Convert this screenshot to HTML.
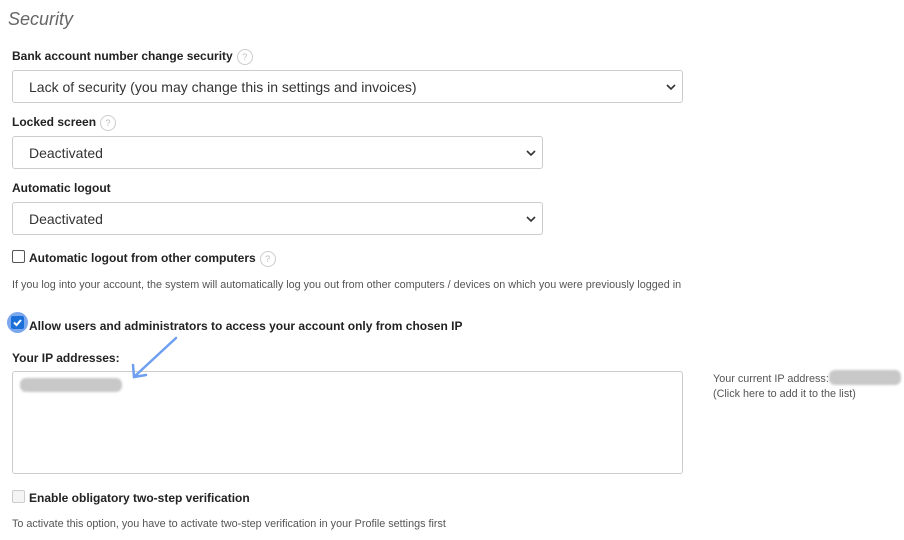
<!DOCTYPE html>
<html><head><style>
body{margin:0;width:904px;height:540px;background:#fff;font-family:"Liberation Sans",Arial,sans-serif;position:relative;overflow:hidden}
.a{position:absolute;white-space:nowrap}
.t{left:8px;top:9px;font-size:18px;font-style:italic;color:#666}
.l{font-size:12px;font-weight:bold;color:#222;left:12px}
.q{display:inline-block;width:14px;height:14px;border:1px solid #ccc;border-radius:50%;font-size:9px;color:#bbb;text-align:center;line-height:14px;font-weight:normal;vertical-align:middle;margin-left:4px}
.s{left:12px;border:1px solid #ccc;border-radius:3px;height:33px;box-sizing:border-box;font-size:14px;color:#333;line-height:32px;padding-left:16px;background:#fff}
.s svg{position:absolute;right:6px;top:13px}
.h{left:12px;font-size:10.8px;color:#555}
.cb{position:absolute;width:11px;height:11px;border:1px solid #555;border-radius:2px;background:#fff}
.blur{position:absolute;background:#c8c8c8;border-radius:6px;filter:blur(1px)}
</style></head><body>
<div class="a t">Security</div>
<div class="a l" style="top:49px">Bank account number change security<span class="q">?</span></div>
<div class="a s" style="top:70px;width:671px">Lack of security (you may change this in settings and invoices)<svg width="10" height="7"><path d="M1 1l4 4 4-4" fill="none" stroke="#333" stroke-width="1.6"/></svg></div>
<div class="a l" style="top:115px">Locked screen<span class="q">?</span></div>
<div class="a s" style="top:136px;width:531px">Deactivated<svg width="10" height="7"><path d="M1 1l4 4 4-4" fill="none" stroke="#333" stroke-width="1.6"/></svg></div>
<div class="a l" style="top:181px">Automatic logout</div>
<div class="a s" style="top:202px;width:531px">Deactivated<svg width="10" height="7"><path d="M1 1l4 4 4-4" fill="none" stroke="#333" stroke-width="1.6"/></svg></div>
<div class="cb" style="left:12px;top:250px"></div>
<div class="a l" style="left:29px;top:251px">Automatic logout from other computers<span class="q">?</span></div>
<div class="a h" style="top:279px">If you log into your account, the system will automatically log you out from other computers / devices on which you were previously logged in</div>
<div style="position:absolute;left:7px;top:312px;width:21px;height:21px;border-radius:50%;background:#7aa7ee"></div>
<div style="position:absolute;left:11px;top:316px;width:13px;height:13px;border-radius:2px;background:#1a6fd8"></div>
<svg style="position:absolute;left:11px;top:316px" width="13" height="13"><path d="M3 6.5l2.5 2.5 4.5-5" fill="none" stroke="#fff" stroke-width="2"/></svg>
<div class="a l" style="left:29px;top:319px">Allow users and administrators to access your account only from chosen IP</div>
<div class="a l" style="top:351px">Your IP addresses:</div>
<div class="a" style="left:12px;top:371px;width:671px;height:103px;border:1px solid #ccc;border-radius:3px;box-sizing:border-box"></div>
<div class="blur" style="left:20px;top:378px;width:102px;height:14px"></div>
<svg style="position:absolute;left:125px;top:335px" width="56" height="48"><path d="M51 3L10 41M8 30l1 12 12-2" fill="none" stroke="#6f9ff0" stroke-width="2.5" stroke-linecap="round"/></svg>
<div class="a" style="left:713px;top:372px;font-size:10.8px;color:#555;line-height:15px">Your current IP address:<br>(Click here to add it to the list)</div>
<div class="blur" style="left:829px;top:370px;width:72px;height:15px"></div>
<div class="cb" style="left:12px;top:490px;border-color:#ccc;background:#f4f4f4"></div>
<div class="a l" style="left:29px;top:491px">Enable obligatory two-step verification</div>
<div class="a h" style="top:518px;font-size:10.8px">To activate this option, you have to activate two-step verification in your Profile settings first</div>
</body></html>
